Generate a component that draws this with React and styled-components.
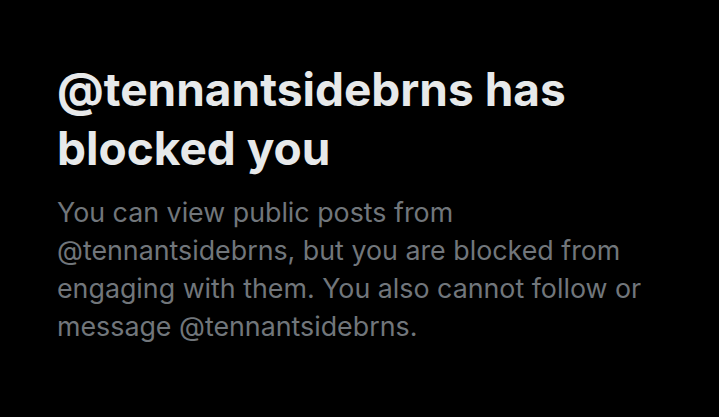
import React from 'react';
import styled, { createGlobalStyle } from 'styled-components';

const Global = createGlobalStyle`
  html, body {
    margin: 0;
    padding: 0;
    background: #000;
  }
`;

const Page = styled.div`
  width: 719px;
  height: 417px;
  background: #000;
  box-sizing: border-box;
  padding: 60px 40px 0 57px;
  font-family: Inter, "Liberation Sans", sans-serif;
`;

const Title = styled.h1`
  margin: 0;
  color: #e7e9ea;
  font-size: 46px;
  line-height: 59px;
  font-weight: 700;
`;

const Body = styled.p`
  margin: 15px 0 0;
  max-width: 600px;
  color: #71767b;
  font-size: 26.8px;
  line-height: 38px;
  font-weight: 400;
`;

export default function App() {
  return (
    <>
      <Global />
      <Page>
        <Title>@tennantsidebrns has blocked you</Title>
        <Body>
          You can view public posts from @tennantsidebrns, but you are blocked from engaging with them. You also cannot follow or message @tennantsidebrns.
        </Body>
      </Page>
    </>
  );
}
